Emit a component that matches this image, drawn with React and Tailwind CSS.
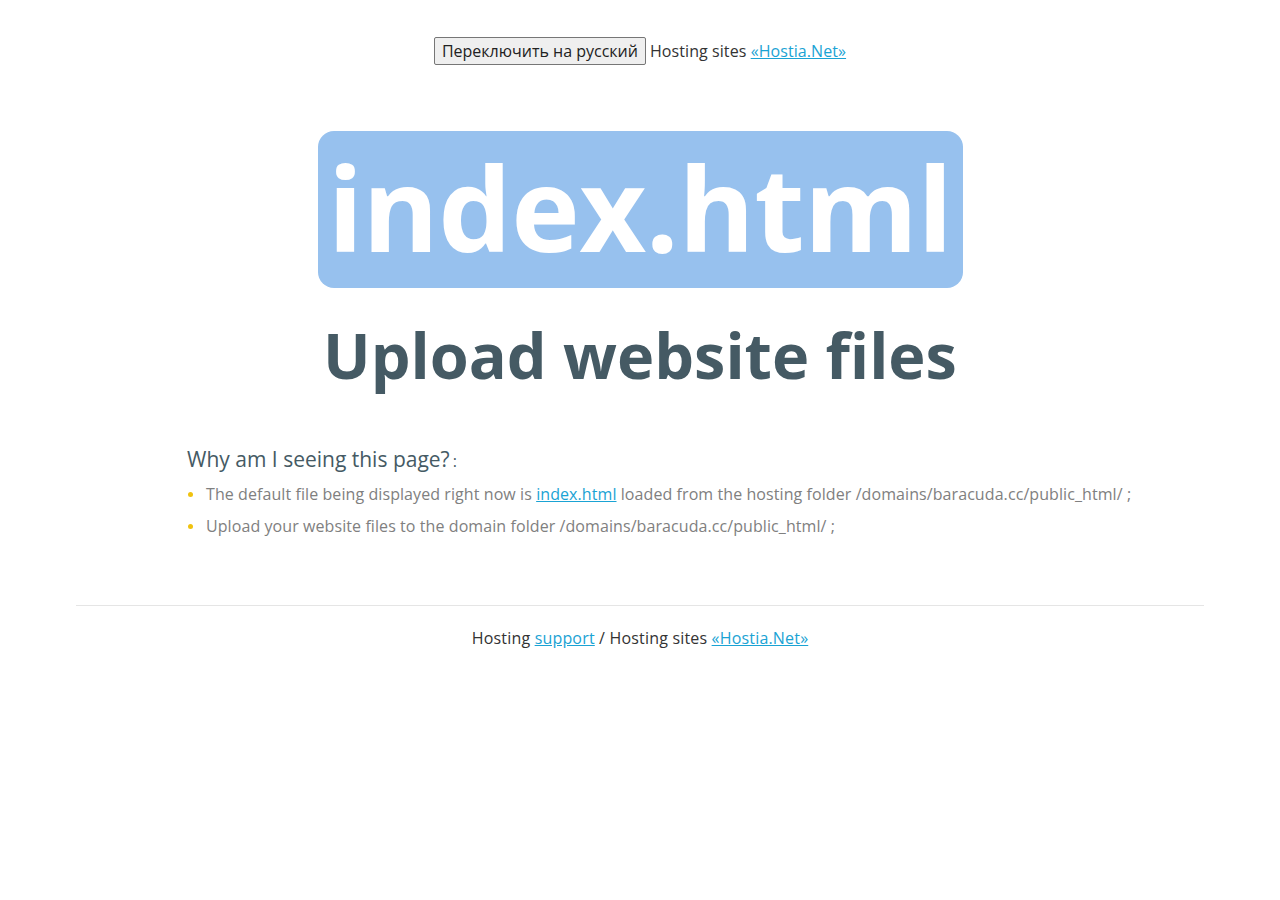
export default function App() {
  const font = { fontFamily: '"Open Sans", sans-serif' };
  return (
    <div className="min-h-[900px] bg-white text-[#333333] tracking-[0.08px]" style={font}>
      <div className="pt-[37px] flex justify-center items-center text-[16px] leading-[28px]">
        <button className="h-[28px] px-[7px] border border-[#767676] rounded-[2px] bg-[#efefef] text-[16px] text-[#222] leading-none tracking-[0px]" style={font}>
          Переключить на русский
        </button>
        <span className="ml-[4px]">Hosting sites <a href="#" className="text-[#1aa3d4] underline">«Hostia.Net»</a></span>
      </div>

      <div className="mt-[66px] flex justify-center">
        <div className="w-[645px] h-[157px] rounded-[16px] bg-[#97c1ee] flex items-center justify-center">
          <span className="text-white font-bold text-[116px] leading-none tracking-[-0.5px] mt-[-6px]">index.html</span>
        </div>
      </div>

      <h1 className="mt-[31px] text-center font-bold text-[63px] leading-[72px] tracking-[0px] text-[#455a64]">Upload website files</h1>

      <div className="mt-[53px] pl-[187px]">
        <div className="text-[21px] leading-[30px] tracking-[0px] text-[#455a64]">Why am I seeing this page?<span className="text-[16px] ml-[3px]">:</span></div>
        <ul className="mt-[2px] text-[16px] text-[#808080]">
          <li className="flex items-center h-[32px]">
            <span className="w-[5px] h-[5px] rounded-full bg-[#f0c20f] ml-[1px] mr-[13px]"></span>
            <span>The default file being displayed right now is <a href="#" className="text-[#1aa3d4] underline">index.html</a> loaded from the hosting folder /domains/baracuda.cc/public_html/ ;</span>
          </li>
          <li className="flex items-center h-[32px]">
            <span className="w-[5px] h-[5px] rounded-full bg-[#f0c20f] ml-[1px] mr-[13px]"></span>
            <span>Upload your website files to the domain folder /domains/baracuda.cc/public_html/ ;</span>
          </li>
        </ul>
      </div>

      <div className="mt-[63px] w-[1128px] mx-auto border-t border-[#e5e5e5]"></div>
      <div className="mt-[20px] text-center text-[16px] leading-[24px] tracking-[0.18px] text-[#333]">
        Hosting <a href="#" className="text-[#1aa3d4] underline">support</a> / Hosting sites <a href="#" className="text-[#1aa3d4] underline">«Hostia.Net»</a>
      </div>
    </div>
  );
}
